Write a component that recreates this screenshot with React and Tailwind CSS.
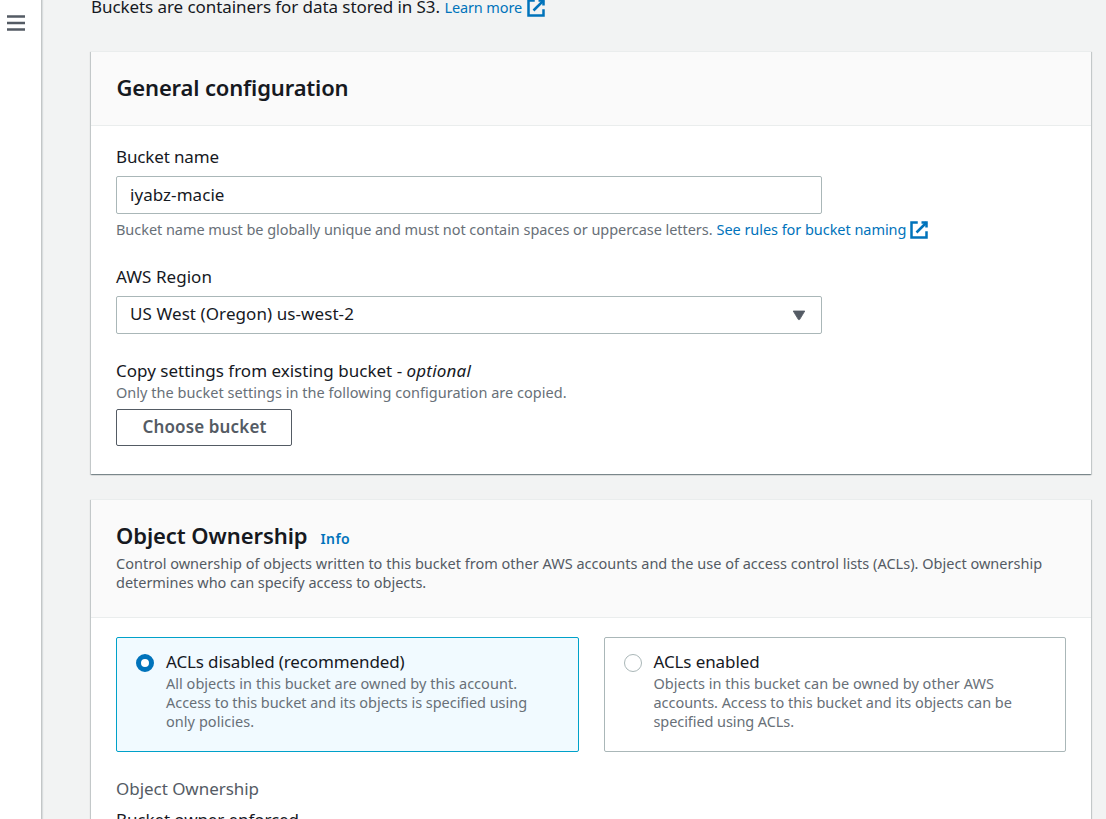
const cardShadow =
  "border-t border-[#eaeded] bg-white shadow-[0_1px_1px_0_rgba(0,28,36,0.3),1px_1px_1px_0_rgba(0,28,36,0.15),-1px_1px_1px_0_rgba(0,28,36,0.15)]";

function ExternalIcon({ className = "" }) {
  return (
    <svg viewBox="0 0 16 16" className={"size-5 shrink-0 fill-none stroke-[#0073bb] stroke-2 " + className}>
      <path d="M10 2h4v4" />
      <path d="M6 10l8-8" />
      <path d="M14 9.048V14H2V2h5" />
    </svg>
  );
}

function Sidebar() {
  return (
    <nav className="w-[42px] shrink-0 border-r border-[#c3c6c7] bg-white pl-[7px] pt-[14px] shadow-[1px_0_1px_0_rgba(0,28,36,0.1)]">
      <svg viewBox="0 0 18 18" className="size-[18px] fill-none stroke-[#545b64] stroke-[2.4]">
        <path d="M0 2.5h18M0 9h18M0 15.5h18" />
      </svg>
    </nav>
  );
}

function Tile({ selected, title, titleClass, children }) {
  return (
    <label
      className={
        "flex h-[115px] rounded-xs border pt-[13px] " +
        (selected ? "w-[463px] border-[#00a1c9] bg-[#f1faff] pl-[19px]" : "w-[462px] border-[#aab7b8] bg-white pl-[18.5px]")
      }
    >
      <span
        className={
          "mt-[3px] size-[18px] shrink-0 rounded-full bg-white " +
          (selected ? "border-[5.5px] border-[#0073bb]" : "border-[1.25px] border-[#aab7b8]")
        }
      />
      <span className="ml-3 block whitespace-nowrap">
        <span className={"block h-[22px] text-[17px] leading-[22px] text-[#16191f] " + titleClass}>{title}</span>
        <span className="mt-px block text-[14.5px] leading-[19px] text-[#687078]">{children}</span>
      </span>
    </label>
  );
}

export default function App() {
  return (
    <div className="flex h-[819px] w-[1106px] overflow-hidden bg-[#f2f3f3] font-['Noto_Sans',sans-serif] text-[17px] leading-[22px] whitespace-nowrap text-[#16191f]">
      <Sidebar />
      <main className="h-[819px] w-[1064px] overflow-hidden pl-[49px]">
        <div className="-mt-1 flex h-[22px]">
          <span className="w-[353.5px] tracking-[-0.073px]">Buckets are containers for data stored in S3.</span>
          <a className="flex text-[14.5px] leading-[23px] tracking-[-0.134px] text-[#0073bb]">
            Learn more
            <ExternalIcon className="ml-[3.5px] mt-[2px]" />
          </a>
        </div>

        <section className={"mt-[33px] h-[423px] w-[1000px] " + cardShadow}>
          <header className="flex h-[74px] items-center border-b border-[#eaeded] bg-[#fafafa] pb-[3px] pl-[25.5px]">
            <h2 className="text-[22px] leading-7 font-semibold tracking-[-0.156px]">General configuration</h2>
          </header>
          <div className="pl-[25px] pt-5">
            <div className="tracking-[-0.134px]">Bucket name</div>
            <div className="mt-2 h-[38px] w-[706px] rounded-xs border border-[#aab7b8] pl-[13px] leading-[35px] tracking-[0.05px]">
              iyabz-macie
            </div>
            <div className="mt-1.5 flex h-5 text-[14.5px] leading-[18px] tracking-[-0.05px] text-[#687078]">
              <span className="w-[600.5px]">
                Bucket name must be globally unique and must not contain spaces or uppercase letters.
              </span>
              <a className="flex text-[#0073bb]">
                See rules for bucket naming
                <ExternalIcon className="ml-[3px]" />
              </a>
            </div>
            <div className="mt-[26px] tracking-[0.045px]">AWS Region</div>
            <div className="mt-2 flex h-[38px] w-[706px] justify-between rounded-xs border border-[#aab7b8] pl-[13px] pr-[15px] leading-[34px] tracking-[0.08px]">
              US West (Oregon) us-west-2
              <svg viewBox="0 0 14 11" className="mt-[13px] h-[11px] w-[14px] fill-[#545b64] stroke-[#545b64] [stroke-linejoin:round]">
                <path d="M1.2 1h11.6L7.6 9.6H6.4z" strokeWidth="0.8" />
              </svg>
            </div>
            <div className="mt-[26px] tracking-[0.01px]">
              Copy settings from existing bucket - <em className="tracking-[0.199px]">optional</em>
            </div>
            <div className="mt-px text-[14.5px] leading-[19px] tracking-[0.025px] text-[#687078]">
              Only the bucket settings in the following configuration are copied.
            </div>
            <button className="mt-[7px] block h-[37px] w-[176px] rounded-xs border border-[#545b64] pb-px pl-px font-semibold tracking-[0.132px] text-[#545b64]">
              Choose bucket
            </button>
          </div>
        </section>

        <section className={"mt-[25px] h-[400px] w-[1000px] " + cardShadow}>
          <header className="h-[118px] border-b border-[#eaeded] bg-[#fafafa] pl-[25px] pt-[21px]">
            <div className="flex h-7 items-baseline">
              <h2 className="text-[22px] leading-7 font-semibold tracking-[-0.08px]">Object Ownership</h2>
              <a className="ml-[13px] text-sm font-semibold tracking-[0.4px] text-[#0073bb]">Info</a>
            </div>
            <p className="mt-[5px] text-[14.5px] leading-[19px] tracking-[0.01px] text-[#545b64]">
              Control ownership of objects written to this bucket from other AWS accounts and the use of access control
              lists (ACLs). Object ownership
              <br />
              <span className="tracking-[-0.03px]">determines who can specify access to objects.</span>
            </p>
          </header>
          <div className="pl-[25px] pt-[19px]">
            <div className="flex gap-[25px]">
              <Tile selected title="ACLs disabled (recommended)" titleClass="tracking-[-0.125px]">
                <span className="tracking-[0.025px]">All objects in this bucket are owned by this account.</span>
                <br />
                <span className="tracking-[-0.045px]">Access to this bucket and its objects is specified using</span>
                <br />
                <span className="tracking-[0.05px]">only policies.</span>
              </Tile>
              <Tile title="ACLs enabled" titleClass="tracking-[-0.105px]">
                <span className="tracking-[0.025px]">Objects in this bucket can be owned by other AWS</span>
                <br />
                <span className="tracking-[-0.045px]">accounts. Access to this bucket and its objects can be</span>
                <br />
                <span className="tracking-[-0.08px]">specified using ACLs.</span>
              </Tile>
            </div>
            <div className="mt-[26px] tracking-[-0.042px] text-[#545b64]">Object Ownership</div>
            <div className="mt-[9px] tracking-[-0.091px]">Bucket owner enforced</div>
          </div>
        </section>
      </main>
    </div>
  );
}
